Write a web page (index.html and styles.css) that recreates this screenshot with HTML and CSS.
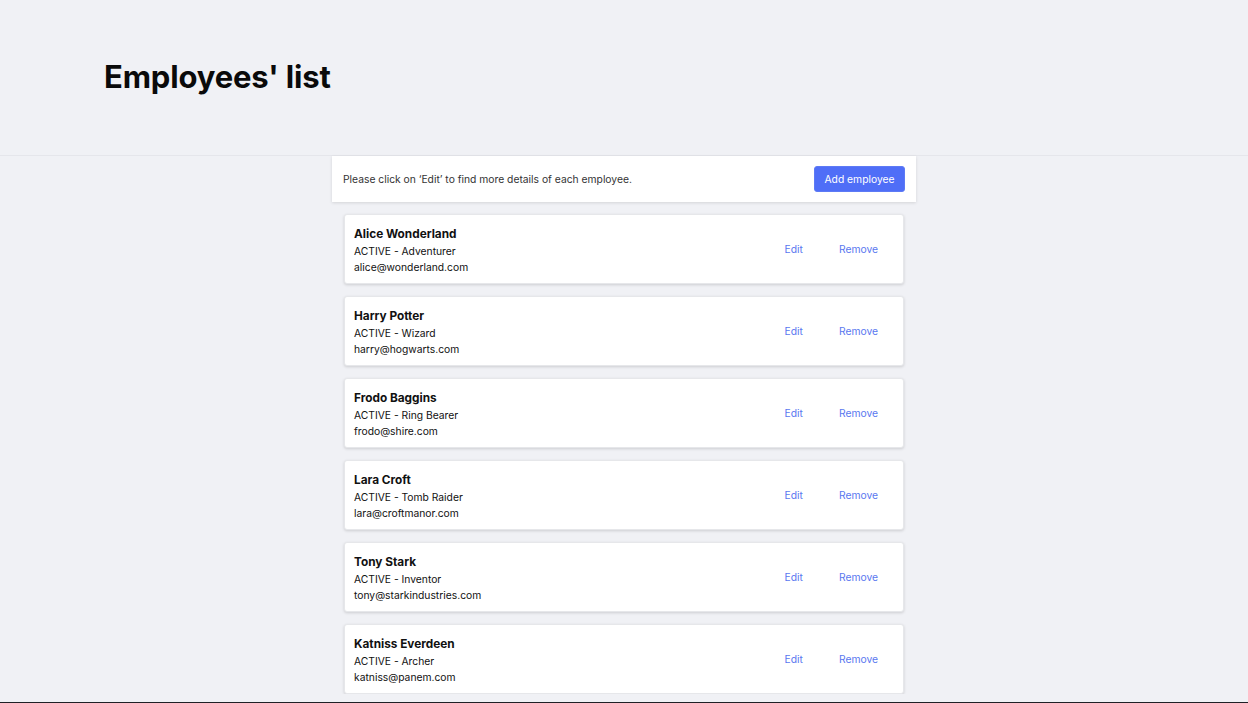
FILE: index.html
```html
<!DOCTYPE html>
<html lang="en">
<head>
<meta charset="utf-8">
<title>Employees' list</title>
<link rel="stylesheet" href="styles.css">
</head>
<body>
<header class="page-header">
  <div class="header-inner">
    <h1 class="title">Employees' list</h1>
  </div>
</header>
<main class="content">
  <div class="toolbar">
    <p class="hint">Please click on ‘Edit’ to find more details of each employee.</p>
    <button class="add-btn">Add employee</button>
  </div>
  <ul class="list">
    <li class="card">
      <div class="info">
        <div class="name">Alice Wonderland</div>
        <div class="line">ACTIVE - Adventurer</div>
        <div class="line">alice@wonderland.com</div>
      </div>
      <div class="actions"><button class="link">Edit</button><button class="link">Remove</button></div>
    </li>
    <li class="card">
      <div class="info">
        <div class="name">Harry Potter</div>
        <div class="line">ACTIVE - Wizard</div>
        <div class="line">harry@hogwarts.com</div>
      </div>
      <div class="actions"><button class="link">Edit</button><button class="link">Remove</button></div>
    </li>
    <li class="card">
      <div class="info">
        <div class="name">Frodo Baggins</div>
        <div class="line">ACTIVE - Ring Bearer</div>
        <div class="line">frodo@shire.com</div>
      </div>
      <div class="actions"><button class="link">Edit</button><button class="link">Remove</button></div>
    </li>
    <li class="card">
      <div class="info">
        <div class="name">Lara Croft</div>
        <div class="line">ACTIVE - Tomb Raider</div>
        <div class="line">lara@croftmanor.com</div>
      </div>
      <div class="actions"><button class="link">Edit</button><button class="link">Remove</button></div>
    </li>
    <li class="card">
      <div class="info">
        <div class="name">Tony Stark</div>
        <div class="line">ACTIVE - Inventor</div>
        <div class="line">tony@starkindustries.com</div>
      </div>
      <div class="actions"><button class="link">Edit</button><button class="link">Remove</button></div>
    </li>
    <li class="card">
      <div class="info">
        <div class="name">Katniss Everdeen</div>
        <div class="line">ACTIVE - Archer</div>
        <div class="line">katniss@panem.com</div>
      </div>
      <div class="actions"><button class="link">Edit</button><button class="link">Remove</button></div>
    </li>
  </ul>
</main>
<div class="bottom-edge"></div>
</body>
</html>
```
FILE: styles.css
```css
* { box-sizing: border-box; }
html, body { margin: 0; padding: 0; }
body {
  background: #f0f1f5;
  font-family: Inter, "Noto Sans", sans-serif;
  color: #111;
}
.page-header {
  height: 156px;
  border-bottom: 1px solid #e5e6eb;
  display: flex;
  align-items: center;
}
.header-inner {
  width: 100%;
  padding: 0 104px 2px;
}
.title {
  margin: 0;
  font-size: 31px;
  font-weight: 700;
  letter-spacing: -0.15px;
  color: #0a0a0a;
}
.content {
  width: 584px;
  margin: 0 auto;
}
.toolbar {
  background: #fff;
  height: 46px;
  padding: 0 11px 0 11px;
  display: flex;
  align-items: center;
  justify-content: space-between;
  box-shadow: 0 1px 3px rgba(0,0,0,0.12);
}
.hint {
  margin: 0;
  font-size: 10.3px;
  color: #333;
}
.add-btn {
  font-family: inherit;
  width: 91px;
  height: 26px;
  background: #4f6ef7;
  color: #fff;
  border: 1px solid #5d7af5;
  border-radius: 3px;
  font-size: 10.3px;
  padding: 0;
}
.list {
  list-style: none;
  margin: 0;
  padding: 12px 12px 0;
  display: flex;
  flex-direction: column;
  gap: 12px;
}
.card {
  background: #fff;
  height: 70px;
  border-radius: 3px;
  border: 1px solid #e6e7ea;
  box-shadow: 0 1px 3px rgba(0,0,0,0.15);
  padding: 2px 9px 0 9px;
  display: flex;
  align-items: center;
  justify-content: space-between;
}
.info { display: flex; flex-direction: column; }
.name {
  font-size: 11.8px;
  font-weight: 700;
  line-height: 16px;
  margin-bottom: 1px;
}
.line {
  font-size: 10.3px;
  line-height: 16px;
  color: #111;
}
.actions { display: flex; gap: 4px; padding-bottom: 3px; }
.link {
  font-family: inherit;
  background: none;
  border: none;
  color: #5a78f0;
  font-size: 10.3px;
  padding: 6px 16px;
}
.bottom-edge {
  position: fixed;
  left: 0;
  right: 0;
  bottom: 0;
  height: 1px;
  background: #1f2026;
}
```
